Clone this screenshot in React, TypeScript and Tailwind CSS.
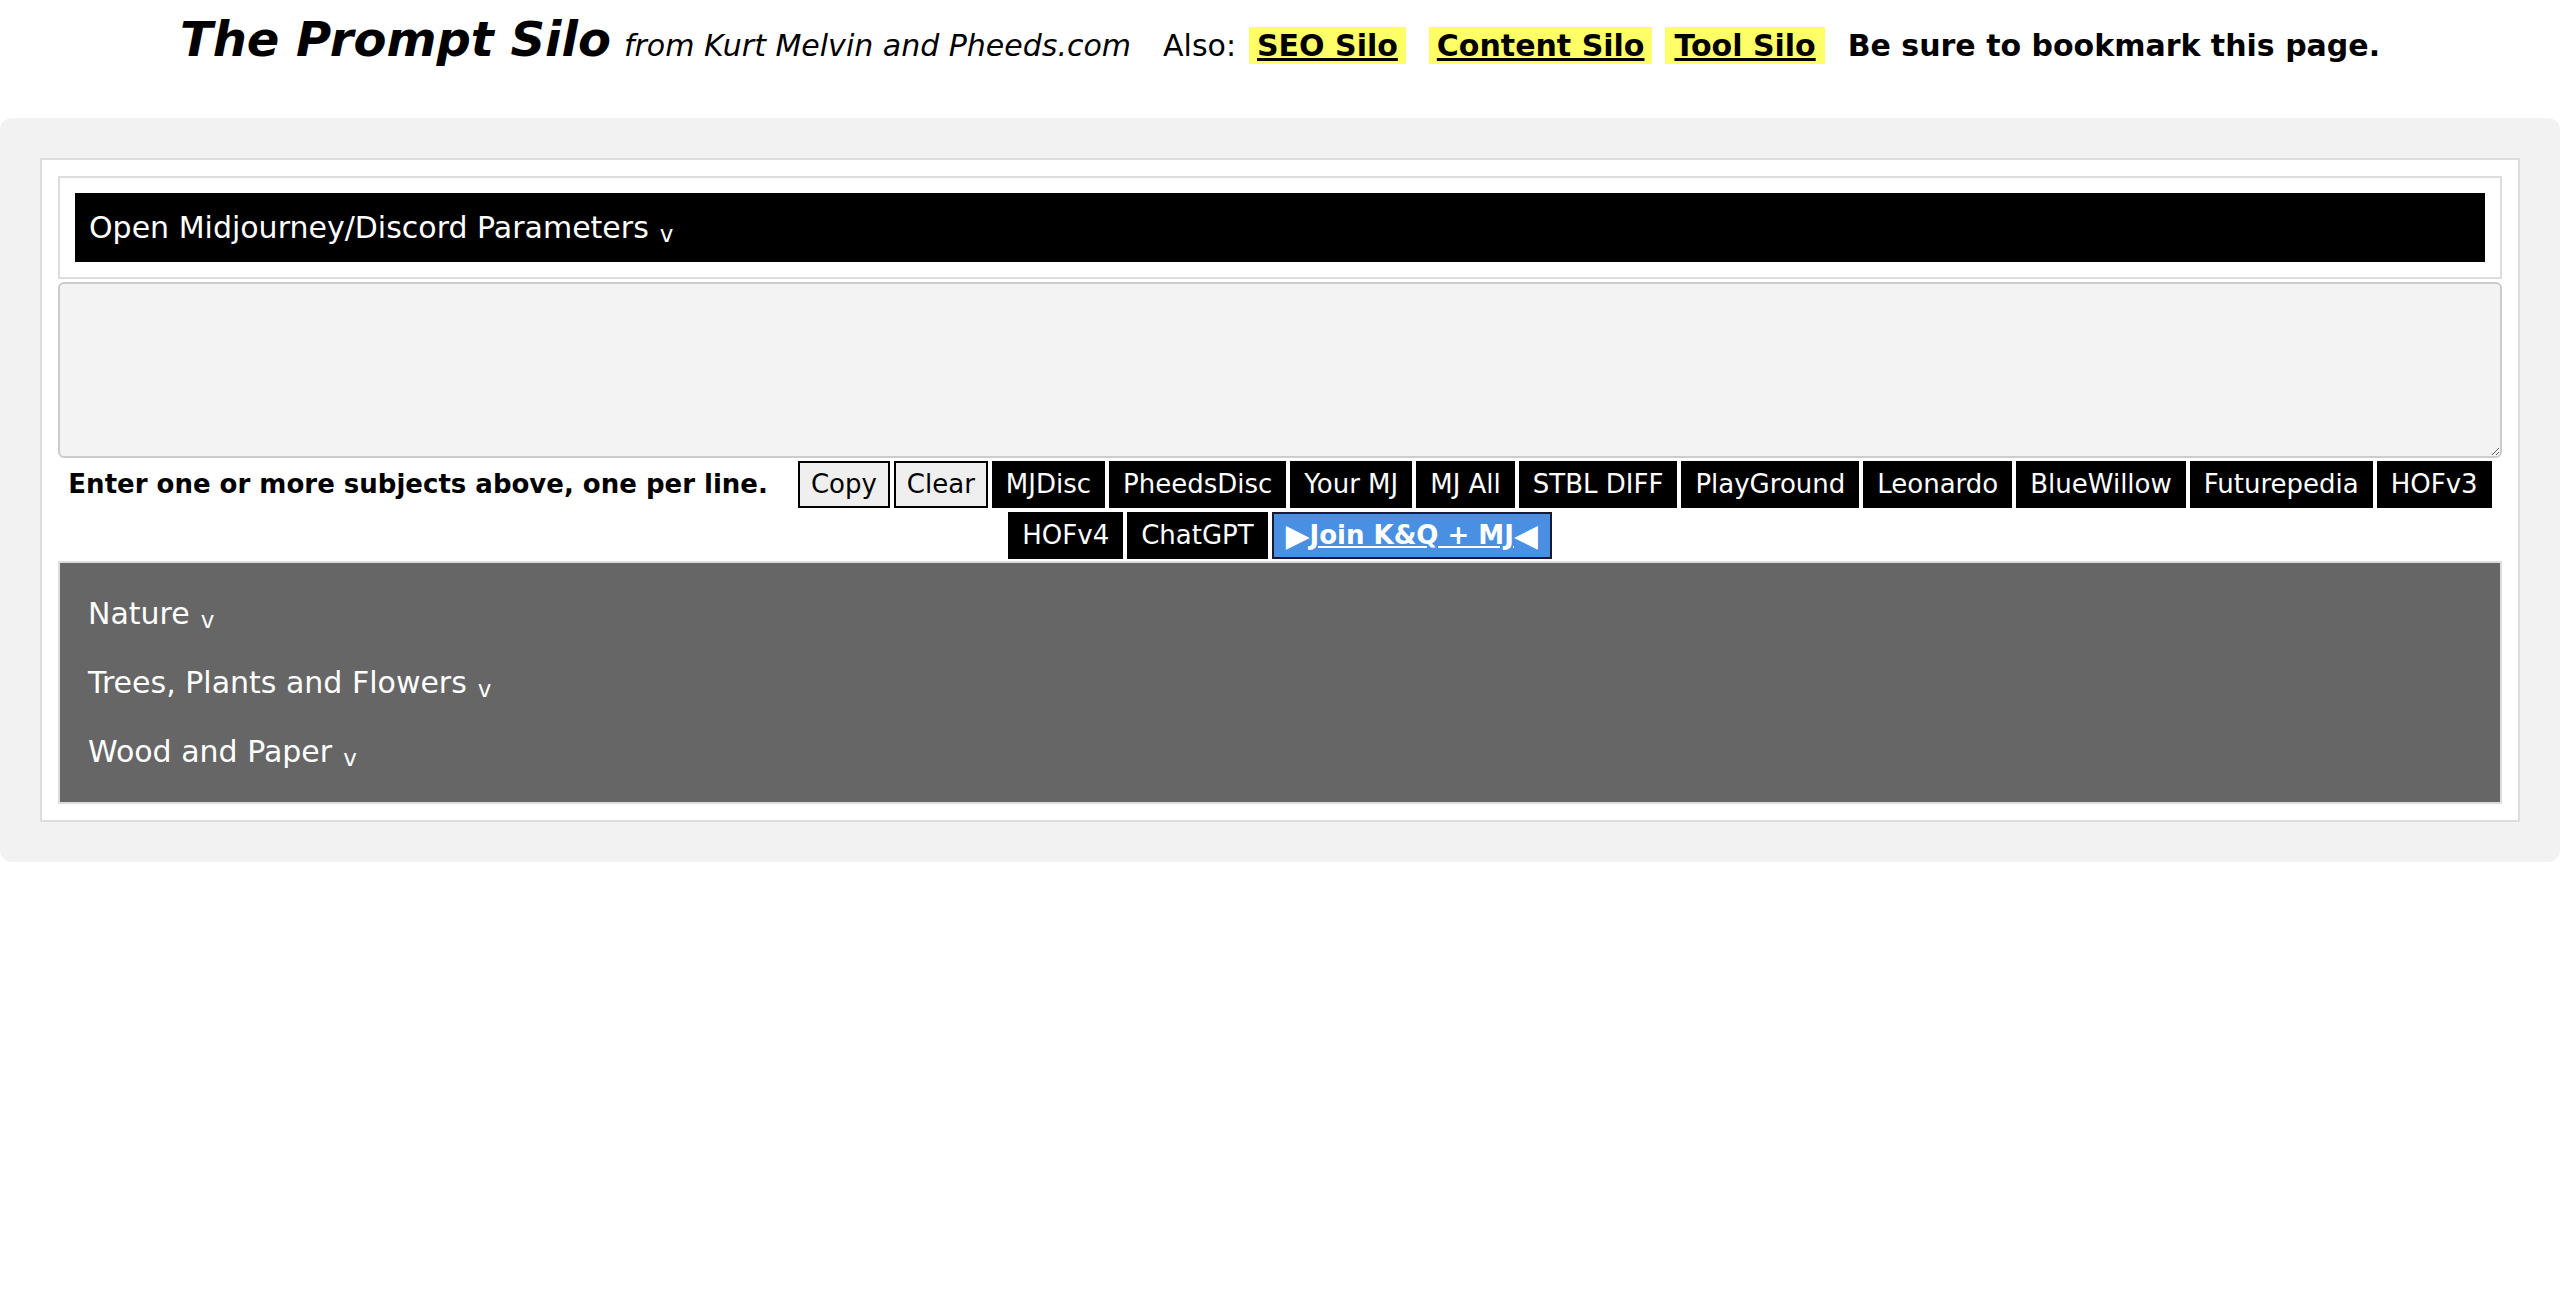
import { useState } from 'react'

const tools = [
  'MJDisc',
  'PheedsDisc',
  'Your MJ',
  'MJ All',
  'STBL DIFF',
  'PlayGround',
  'Leonardo',
  'BlueWillow',
  'Futurepedia',
  'HOFv3',
  'HOFv4',
  'ChatGPT',
]

const categories = ['Nature', 'Trees, Plants and Flowers', 'Wood and Paper']

function Chevron() {
  return <span className="inline-block ml-[11px] text-[23px] leading-none align-[-4px]">v</span>
}

export default function App() {
  const [subjects, setSubjects] = useState('')

  return (
    <div className="min-h-screen bg-white text-black font-['DejaVu_Sans','Verdana',sans-serif]">
      {/* Header */}
      <div className="h-[118px] pt-[3px] text-center text-[30px] whitespace-nowrap">
        <span className="text-[48px] font-bold italic">The Prompt Silo</span>
        <span className="ml-[13px] italic">from Kurt Melvin and Pheeds.com</span>
        <span className="ml-[32px]">Also:</span>
        <a href="#" className="ml-[13px] px-[8px] py-[1px] bg-[#ffff66] font-bold underline">
          SEO Silo
        </a>
        <a href="#" className="ml-[23px] px-[8px] py-[1px] bg-[#ffff66] font-bold underline">
          Content Silo
        </a>
        <a href="#" className="ml-[13px] px-[9px] py-[1px] bg-[#ffff66] font-bold underline">
          Tool Silo
        </a>
        <span className="ml-[23px] font-bold">Be sure to bookmark this page.</span>
      </div>

      <div className="bg-[#f2f2f2] rounded-[12px] p-[40px]">
        <div className="bg-white border-2 border-[#dddddd] p-[16px]">
          {/* Parameters */}
          <div className="border-2 border-[#dddddd] p-[15px]">
            <div className="h-[69px] flex items-center bg-black text-white text-[30px] leading-[35px] px-[14px]">
              <span>
                Open Midjourney/Discord Parameters
                <Chevron />
              </span>
            </div>
          </div>

          <textarea
            value={subjects}
            onChange={(e) => setSubjects(e.target.value)}
            className="block w-full h-[176px] mt-[3px] bg-[#f3f3f3] border-2 border-[#cccccc] rounded-[6px] p-2 text-[26px] outline-none"
          />

          {/* Buttons */}
          <div className="flex flex-wrap justify-center items-center gap-x-[4px] gap-y-[4px] mt-[3px]">
            <span className="mr-[26px] text-[26px] font-bold">Enter one or more subjects above, one per line.</span>
            <button
              onClick={() => navigator.clipboard?.writeText(subjects)}
              className="h-[47px] px-[11px] border-2 border-black bg-[#efefef] text-[26px]"
            >
              Copy
            </button>
            <button
              onClick={() => setSubjects('')}
              className="h-[47px] px-[11px] border-2 border-black bg-[#efefef] text-[26px]"
            >
              Clear
            </button>
            {tools.map((t) => (
              <button key={t} className="h-[47px] px-[12px] border-2 border-black bg-black text-white text-[26px]">
                {t}
              </button>
            ))}
            <button className="h-[47px] px-[12px] flex items-center border-2 border-[#1a1a2e] bg-[#4a90e2] text-white text-[26px] font-bold">
              <span className="text-[31px] leading-none">▶</span>
              <span className="underline">Join K&amp;Q + MJ</span>
              <span className="text-[31px] leading-none">◀</span>
            </button>
          </div>

          {/* Categories */}
          <div className="mt-[2px] bg-[#666666] border-2 border-[#dddddd] py-[16px] px-[28px] text-white text-[30px]">
            {categories.map((c) => (
              <div key={c} className="h-[69px] flex items-center">
                <span className="leading-[35px]">
                  {c}
                  <Chevron />
                </span>
              </div>
            ))}
          </div>
        </div>
      </div>
    </div>
  )
}
